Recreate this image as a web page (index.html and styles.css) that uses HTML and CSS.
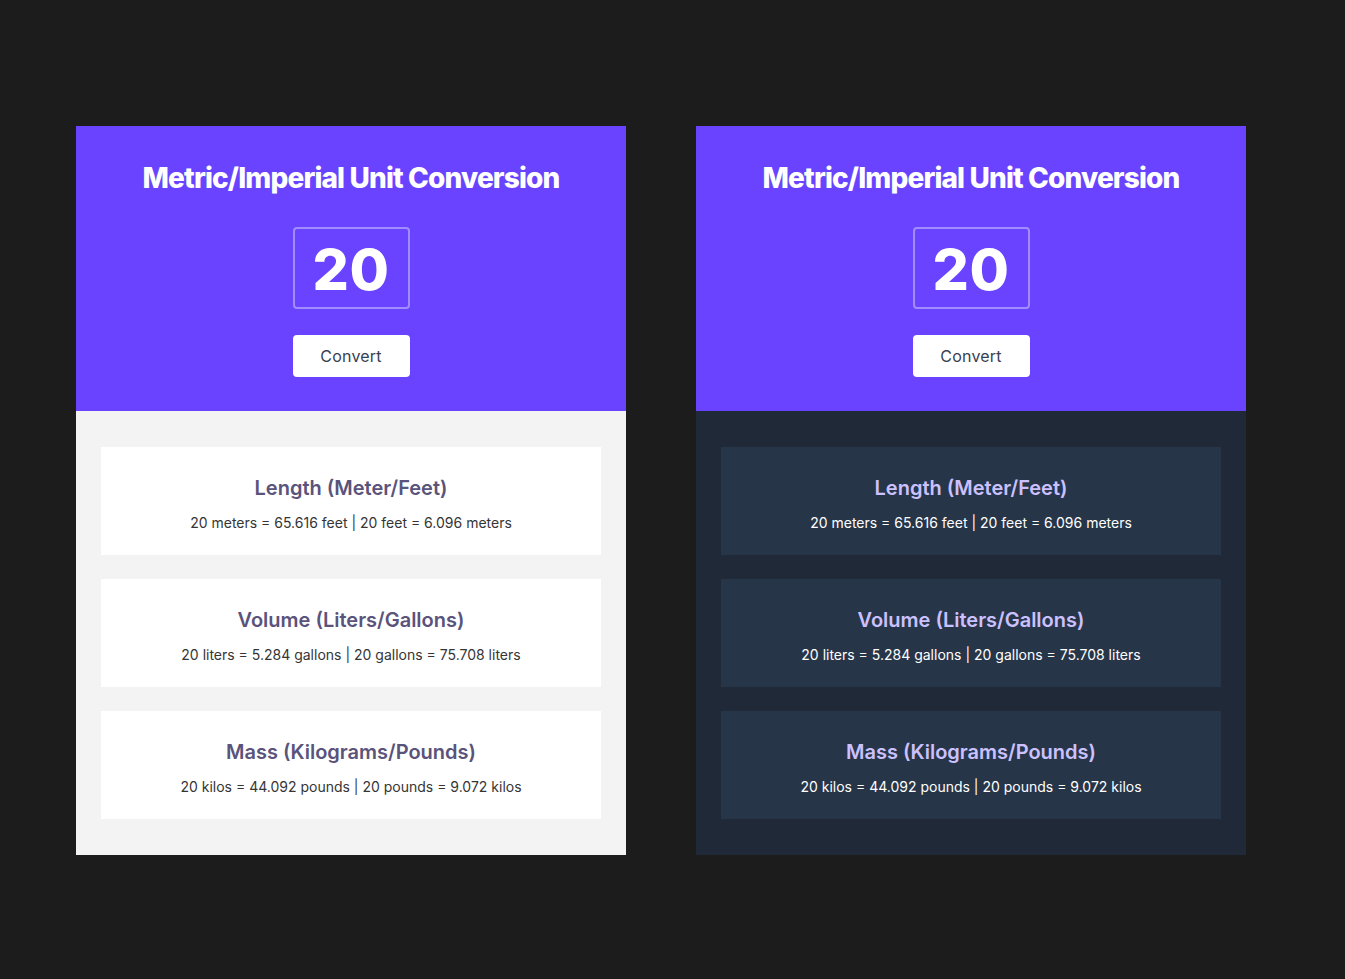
FILE: index.html
```html
<!DOCTYPE html>
<html>
<head>
<meta charset="utf-8">
<link rel="stylesheet" href="styles.css">
</head>
<body>
<div class="page">
  <div class="panel light">
    <div class="header">
      <h1 class="title">Metric/Imperial Unit Conversion</h1>
      <div class="value">20</div>
      <button class="btn">Convert</button>
    </div>
    <div class="body">
      <div class="card">
        <h2 class="card-title">Length (Meter/Feet)</h2>
        <p class="card-text">20 meters = 65.616 feet | 20 feet = 6.096 meters</p>
      </div>
      <div class="card">
        <h2 class="card-title">Volume (Liters/Gallons)</h2>
        <p class="card-text">20 liters = 5.284 gallons | 20 gallons = 75.708 liters</p>
      </div>
      <div class="card">
        <h2 class="card-title">Mass (Kilograms/Pounds)</h2>
        <p class="card-text">20 kilos = 44.092 pounds | 20 pounds = 9.072 kilos</p>
      </div>
    </div>
  </div>
  <div class="panel dark">
    <div class="header">
      <h1 class="title">Metric/Imperial Unit Conversion</h1>
      <div class="value">20</div>
      <button class="btn">Convert</button>
    </div>
    <div class="body">
      <div class="card">
        <h2 class="card-title">Length (Meter/Feet)</h2>
        <p class="card-text">20 meters = 65.616 feet | 20 feet = 6.096 meters</p>
      </div>
      <div class="card">
        <h2 class="card-title">Volume (Liters/Gallons)</h2>
        <p class="card-text">20 liters = 5.284 gallons | 20 gallons = 75.708 liters</p>
      </div>
      <div class="card">
        <h2 class="card-title">Mass (Kilograms/Pounds)</h2>
        <p class="card-text">20 kilos = 44.092 pounds | 20 pounds = 9.072 kilos</p>
      </div>
    </div>
  </div>
</div>
</body>
</html>
```
FILE: styles.css
```css
* { box-sizing: border-box; }
html, body { margin: 0; padding: 0; }
body {
  background: #1c1c1c;
  font-family: Inter, "Liberation Sans", sans-serif;
  width: 1345px;
  height: 979px;
}
.page {
  display: flex;
  gap: 70px;
  padding: 126px 0 0 76px;
}
.panel {
  width: 550px;
  display: flex;
  flex-direction: column;
}
.header {
  background: #6943ff;
  height: 285px;
  padding-top: 33px;
  display: flex;
  flex-direction: column;
  align-items: center;
}
.title {
  margin: 0;
  color: #fff;
  font-size: 28px;
  font-weight: 800;
  line-height: 38px;
  letter-spacing: -0.85px;
}
.value {
  margin-top: 30px;
  width: 117px;
  height: 82px;
  padding-top: 3px;
  border: 2px solid #a08bff;
  border-radius: 4px;
  color: #fff;
  font-size: 57px;
  font-weight: 800;
  display: flex;
  align-items: center;
  justify-content: center;
  letter-spacing: 0.5px;
}
.btn {
  margin-top: 26px;
  width: 117px;
  height: 42px;
  border: none;
  border-radius: 4px;
  background: #fff;
  color: #374151;
  font-family: Inter, "Liberation Sans", sans-serif;
  font-size: 16px;
  font-weight: 400;
  letter-spacing: 0.2px;
  padding: 0;
}
.body {
  padding: 36px 25px;
  display: flex;
  flex-direction: column;
  gap: 24px;
}
.card {
  height: 108px;
  padding-top: 28px;
  text-align: center;
}
.card-title {
  margin: 0;
  font-size: 20px;
  font-weight: 600;
  line-height: 26px;
}
.card-text {
  margin: 12px 0 0;
  font-size: 14px;
  line-height: 20px;
  letter-spacing: 0;
}
.light .body { background: #f3f3f3; }
.light .card { background: #fff; }
.light .card-title { color: #5a537b; }
.light .card-text { color: #353535; }
.dark .body { background: #1f2937; }
.dark .card { background: #273549; }
.dark .card-title { color: #ccc1ff; }
.dark .card-text { color: #fff; }
```
